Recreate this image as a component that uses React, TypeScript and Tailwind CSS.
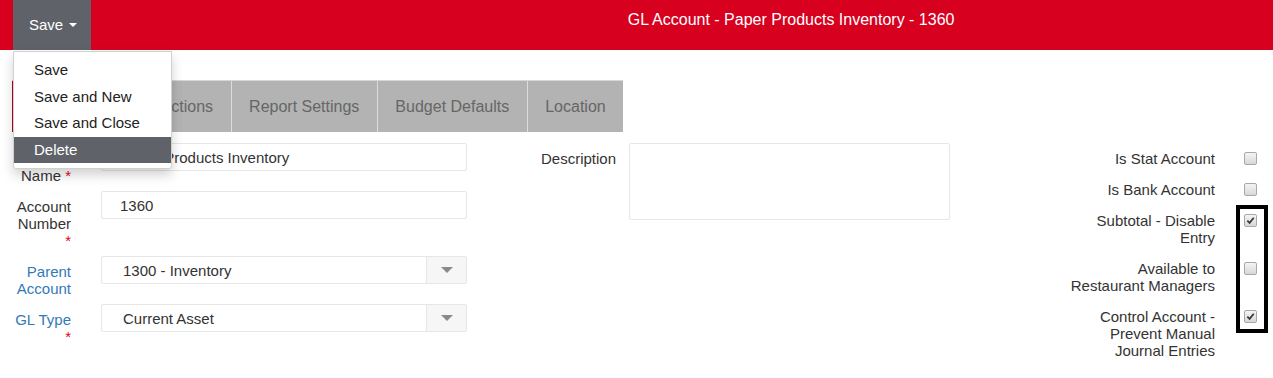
const tabs = ["Restrictions", "Report Settings", "Budget Defaults", "Location"];

const flags = [
  { label: "Is Stat Account", checked: false },
  { label: "Is Bank Account", checked: false },
  { label: "Subtotal - Disable Entry", checked: true },
  { label: "Available to Restaurant Managers", checked: false },
  { label: "Control Account - Prevent Manual Journal Entries", checked: true },
];

function Req() {
  return <span className="text-[#e4001b]">*</span>;
}

function Caret({ className }: { className: string }) {
  return (
    <span
      className={`inline-block w-0 h-0 border-x-[4px] border-x-transparent border-t-[4px] ${className}`}
    />
  );
}

function Checkbox({ checked }: { checked: boolean }) {
  return (
    <span className="flex items-center justify-center w-[13px] h-[13px] shrink-0 border border-[#a8a8a8] rounded-[2px] bg-linear-to-b from-[#f4f4f4] to-[#d8d8d8]">
      {checked && (
        <svg width="9" height="9" viewBox="0 0 10 10">
          <path d="M1.5 5.2 L4 7.6 L8.6 2" fill="none" stroke="#3a3a3a" strokeWidth={2} />
        </svg>
      )}
    </span>
  );
}

function TextField({ value }: { value: string }) {
  return (
    <div className="ml-[30px] w-[366px] h-[28px] flex items-center pl-[18px] border border-[#e6e6e6] rounded-[2px] text-[15px] text-[#333]">
      {value}
    </div>
  );
}

function SelectField({ value }: { value: string }) {
  return (
    <div className="ml-[30px] w-[366px] h-[28px] flex border border-[#e6e6e6] rounded-[2px] text-[15px] text-[#333]">
      <div className="flex-1 flex items-center pl-[21px]">{value}</div>
      <div className="w-[40px] flex items-center justify-center border-l border-[#e6e6e6] bg-[#f6f6f6]">
        <span className="inline-block w-0 h-0 border-x-[6px] border-x-transparent border-t-[6px] border-t-[#8a8a8a]" />
      </div>
    </div>
  );
}

export default function App() {
  return (
    <div className="relative w-full h-[378px] bg-white overflow-hidden font-['Liberation_Sans',Arial,sans-serif] text-[#333]">
      <div className="flex h-[50px] bg-[#d7001f] pl-[13px]">
        <button className="flex items-center h-full pl-4 pr-[14px] bg-[#5f6268] text-white text-[15px]">
          Save
          <Caret className="ml-[6px] border-t-white" />
        </button>
        <div className="flex-1 text-center pt-[11px] pl-[218px] text-white text-[16px] leading-[18px]">
          GL Account - Paper Products Inventory - 1360
        </div>
      </div>

      <div className="mt-[30px] ml-[12px] flex w-fit h-[52px] border-t border-[#d6d6d6] text-[16px] text-[#666]">
        <div className="w-[99px] border-l border-[#b8001a] bg-white flex items-center pl-[18px]">
          General
        </div>
        {tabs.map((t) => (
          <div
            key={t}
            className="flex items-center px-[17.5px] bg-[#b3b3b3] border-l border-[#dcdcdc]"
          >
            {t}
          </div>
        ))}
      </div>

      <div className="mt-[11px] flex pl-[12px] pr-[16px] text-[15px] leading-[17px]">
        <div className="w-[455px] flex flex-col gap-[7px]">
          <div className="flex items-start">
            <div className="w-[59px] pt-[7px] text-right">
              Account Name <Req />
            </div>
            <TextField value="Paper Products Inventory" />
          </div>
          <div className="flex items-start">
            <div className="w-[59px] pt-[7px] text-right">
              Account Number <Req />
            </div>
            <TextField value="1360" />
          </div>
          <div className="flex items-start">
            <div className="w-[59px] pt-[7px] text-right text-[#337ab7]">Parent Account</div>
            <SelectField value="1300 - Inventory" />
          </div>
          <div className="flex items-start">
            <div className="w-[59px] pt-[7px] text-right">
              <span className="text-[#337ab7]">GL Type</span> <Req />
            </div>
            <SelectField value="Current Asset" />
          </div>
        </div>

        <div className="flex items-start">
          <div className="w-[149px] pt-[7px] text-right">Description</div>
          <div className="ml-[13px] w-[321px] h-[77px] border border-[#e6e6e6] rounded-[2px]" />
        </div>

        <div className="ml-auto flex flex-col gap-[14px] pt-[7px]">
          {flags.map((f) => (
            <div key={f.label} className="flex items-start">
              <div className="w-[148px] text-right">{f.label}</div>
              <div className="ml-[29px] mt-[2px]">
                <Checkbox checked={f.checked} />
              </div>
            </div>
          ))}
        </div>
      </div>

      <div className="absolute left-[1236px] top-[205px] w-[32px] h-[128px] border-4 border-black" />

      <div className="absolute left-[13px] top-[51px] w-[159px] py-[5px] bg-white border border-[#d0d0d0] rounded-b-[3px] shadow-[0_6px_12px_rgba(0,0,0,0.18)] text-[15px] text-[#222]">
        <div className="h-[26.5px] flex items-center pl-[20px]">Save</div>
        <div className="h-[26.5px] flex items-center pl-[20px]">Save and New</div>
        <div className="h-[26.5px] flex items-center pl-[20px]">Save and Close</div>
        <div className="h-[26.5px] flex items-center pl-[20px] bg-[#5f6268] text-white">Delete</div>
      </div>
    </div>
  );
}
